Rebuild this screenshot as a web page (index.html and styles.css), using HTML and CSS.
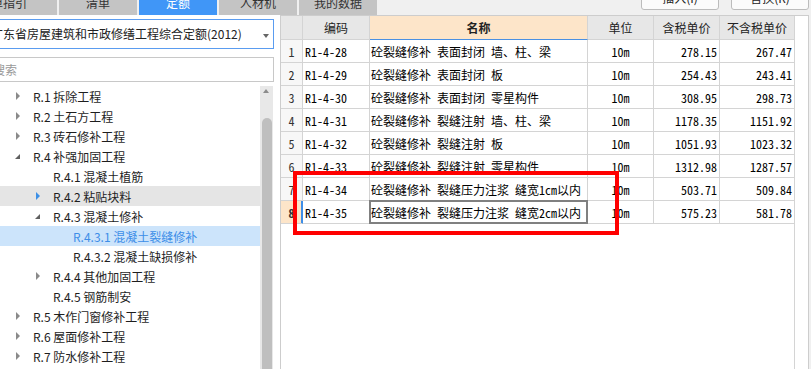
FILE: index.html
```html
<!DOCTYPE html>
<html lang="zh-CN">
<head>
    <meta charset="UTF-8">
    <title>定额</title>
    <link rel="stylesheet" href="styles.css">
</head>
<body>
    <div class="topbar">
        <div class="tabs">
            <div class="tab tab-first">清单指引</div>
            <div class="tab">清单</div>
            <div class="tab active">定额</div>
            <div class="tab">人材机</div>
            <div class="tab">我的数据</div>
        </div>
        <div class="actions">
            <div class="btn">插入(I)</div>
            <div class="btn">替换(R)</div>
        </div>
    </div>

    <div class="main">
        <div class="side">
            <div class="select">广东省房屋建筑和市政修缮工程综合定额(2012)<span class="caret"></span></div>
            <div class="search">搜索</div>
            <div class="tree-wrap">
                <div class="tree">
                    <div class="node"><span class="arrow closed"></span>R.1 拆除工程</div>
                    <div class="node"><span class="arrow closed"></span>R.2 土石方工程</div>
                    <div class="node"><span class="arrow closed"></span>R.3 砖石修补工程</div>
                    <div class="node"><span class="arrow open"></span>R.4 补强加固工程</div>
                    <div class="node lv2"><span class="arrow"></span>R.4.1 混凝土植筋</div>
                    <div class="node lv2 hover"><span class="arrow closed"></span>R.4.2 粘贴块料</div>
                    <div class="node lv2"><span class="arrow open"></span>R.4.3 混凝土修补</div>
                    <div class="node lv3 selected"><span class="arrow"></span>R.4.3.1 混凝土裂缝修补</div>
                    <div class="node lv3"><span class="arrow"></span>R.4.3.2 混凝土缺损修补</div>
                    <div class="node lv2"><span class="arrow closed"></span>R.4.4 其他加固工程</div>
                    <div class="node lv2"><span class="arrow"></span>R.4.5 钢筋制安</div>
                    <div class="node"><span class="arrow closed"></span>R.5 木作门窗修补工程</div>
                    <div class="node"><span class="arrow closed"></span>R.6 屋面修补工程</div>
                    <div class="node"><span class="arrow closed"></span>R.7 防水修补工程</div>
                </div>
                <div class="scrollbar">
                    <span class="sb-up"></span>
                    <span class="sb-thumb"></span>
                </div>
            </div>
        </div>

        <div class="panel">
            <div class="grid">
                <div class="hd"></div>
                <div class="hd">编码</div>
                <div class="hd hd-active">名称</div>
                <div class="hd">单位</div>
                <div class="hd">含税单价</div>
                <div class="hd">不含税单价</div>

                <div class="c no">1</div>
                <div class="c code">R1-4-28</div>
                <div class="c name">砼裂缝修补 表面封闭 墙、柱、梁</div>
                <div class="c unit">10m</div>
                <div class="c num">278.15</div>
                <div class="c num">267.47</div>

                <div class="c no">2</div>
                <div class="c code">R1-4-29</div>
                <div class="c name">砼裂缝修补 表面封闭 板</div>
                <div class="c unit">10m</div>
                <div class="c num">254.43</div>
                <div class="c num">243.41</div>

                <div class="c no">3</div>
                <div class="c code">R1-4-30</div>
                <div class="c name">砼裂缝修补 表面封闭 零星构件</div>
                <div class="c unit">10m</div>
                <div class="c num">308.95</div>
                <div class="c num">298.73</div>

                <div class="c no">4</div>
                <div class="c code">R1-4-31</div>
                <div class="c name">砼裂缝修补 裂缝注射 墙、柱、梁</div>
                <div class="c unit">10m</div>
                <div class="c num">1178.35</div>
                <div class="c num">1151.92</div>

                <div class="c no">5</div>
                <div class="c code">R1-4-32</div>
                <div class="c name">砼裂缝修补 裂缝注射 板</div>
                <div class="c unit">10m</div>
                <div class="c num">1051.93</div>
                <div class="c num">1023.32</div>

                <div class="c no">6</div>
                <div class="c code">R1-4-33</div>
                <div class="c name">砼裂缝修补 裂缝注射 零星构件</div>
                <div class="c unit">10m</div>
                <div class="c num">1312.98</div>
                <div class="c num">1287.57</div>

                <div class="c no">7</div>
                <div class="c code">R1-4-34</div>
                <div class="c name">砼裂缝修补 裂缝压力注浆 缝宽1cm以内</div>
                <div class="c unit">10m</div>
                <div class="c num">503.71</div>
                <div class="c num">509.84</div>

                <div class="c no current">8</div>
                <div class="c code">R1-4-35</div>
                <div class="c name editing">砼裂缝修补 裂缝压力注浆 缝宽2cm以内</div>
                <div class="c unit">10m</div>
                <div class="c num">575.23</div>
                <div class="c num">581.78</div>
            </div>
            <div class="grid-fill"></div>
            <div class="mark"></div>
        </div>
    </div>
</body>
</html>
```

FILE: styles.css
```css
* {
    margin: 0;
    padding: 0;
    box-sizing: border-box;
}

body {
    width: 811px;
    height: 369px;
    overflow: hidden;
    background: #f0f0f0;
    font-family: "Noto Sans CJK SC", "Liberation Sans", sans-serif;
    font-size: 12px;
    color: #222;
}

/* top tabs + buttons */
.topbar {
    display: flex;
    height: 15px;
}

.tabs {
    display: flex;
    gap: 2px;
    margin-left: -51px;
}

.tab {
    width: 78px;
    height: 24px;
    margin-top: -9px;
    line-height: 24px;
    text-align: center;
    background: #c4c4c4;
    color: #333;
}

.tab-first {
    width: 108px;
}

.tab.active {
    background: #4096f7;
    color: #fff;
}

.actions {
    display: flex;
    gap: 12px;
    margin-left: auto;
    padding-right: 2px;
}

.btn {
    width: 78px;
    height: 24px;
    margin-top: -14px;
    line-height: 22px;
    text-align: center;
    background: #fbfbfb;
    border: 1px solid #bcbcbc;
    border-radius: 3px;
    color: #222;
}

.main {
    display: flex;
    height: 354px;
    overflow: hidden;
}

/* left side: library picker and tree */
.side {
    width: 280px;
    background: #fff;
    display: flex;
    flex-direction: column;
}

.select {
    position: relative;
    width: 286px;
    height: 30px;
    margin: 4px 0 0 -12px;
    padding-left: 2px;
    border: 1px solid #5a9cf0;
    line-height: 28px;
    white-space: nowrap;
    color: #222;
}

.caret {
    position: absolute;
    right: 4px;
    top: 14px;
    border-top: 4px solid #666;
    border-left: 3.5px solid transparent;
    border-right: 3.5px solid transparent;
}

.search {
    width: 286px;
    height: 25px;
    margin: 8px 0 0 -12px;
    padding-left: 4px;
    border: 1px solid #c8c8c8;
    line-height: 23px;
    color: #999;
}

.tree-wrap {
    display: flex;
    flex: 1;
    margin-top: 4px;
}

.tree {
    width: 260px;
}

.node {
    display: flex;
    align-items: center;
    height: 20px;
    padding-left: 10px;
    color: #1e1e1e;
    white-space: nowrap;
}

.node.lv2 { padding-left: 30px; }
.node.lv3 { padding-left: 50px; }

.node.hover { background: #e5e5e5; }

.node.selected {
    background: #cce4fb;
    color: #3d8ee8;
}

.arrow {
    position: relative;
    width: 16px;
    height: 20px;
    margin-right: 7px;
}

.arrow.closed::before {
    content: "";
    position: absolute;
    left: 6px;
    top: 6px;
    border-left: 4px solid #8a8a8a;
    border-top: 4px solid transparent;
    border-bottom: 4px solid transparent;
}

.hover .arrow.closed::before {
    border-left-color: #3c8fe6;
}

.arrow.open::before {
    content: "";
    position: absolute;
    left: 5px;
    top: 8px;
    border-bottom: 5px solid #606060;
    border-left: 5px solid transparent;
}

.scrollbar {
    position: relative;
    width: 13px;
    background: #e8e8e8;
    overflow: hidden;
}

.sb-up {
    position: absolute;
    left: 3px;
    top: 3px;
    border-bottom: 4px solid #8c8c8c;
    border-left: 3.5px solid transparent;
    border-right: 3.5px solid transparent;
}

.sb-thumb {
    position: absolute;
    left: 2px;
    top: 32px;
    width: 10px;
    height: 300px;
    border-radius: 5px;
    background: #bfbfbf;
}

/* right side: quota table */
.panel {
    position: relative;
    width: 529px;
    height: 370px;
    background: #fff;
    border: 1px solid #cdcdcd;
    display: flex;
    flex-direction: column;
}

.grid {
    display: grid;
    grid-template-columns: 22px 67px 218px 66px 66px 75px;
    grid-template-rows: 24px;
    grid-auto-rows: 23px;
    width: 514px;
}

.hd, .c {
    display: flex;
    align-items: center;
    border-right: 1px solid #d4d4d4;
    border-bottom: 1px solid #d4d4d4;
    white-space: nowrap;
    overflow: hidden;
}

.hd {
    justify-content: center;
    background: #e7e7e7;
    color: #222;
}

.hd-active {
    background: #fde5c9;
    border-bottom-color: #4a90e2;
    font-weight: bold;
}

.c {
    font-family: "Noto Sans Mono CJK SC", "Noto Sans CJK SC", monospace;
    color: #000;
}

.no {
    justify-content: center;
    background: #f7f7f7;
    color: #333;
}

.no.current {
    background: #fde5c9;
    font-weight: bold;
    border-right-color: #3d8ee8;
    box-shadow: inset -1px 0 #3d8ee8;
}

.code { padding-left: 2px; }
.name { padding-left: 1px; }
.unit { justify-content: center; }

.num {
    justify-content: flex-end;
    padding-right: 2px;
}

.editing {
    position: relative;
    overflow: visible;
}

.editing::after {
    content: "";
    position: absolute;
    left: -1px;
    top: -1px;
    right: -1px;
    bottom: -1px;
    border: 2px solid #808080;
}

.grid-fill {
    flex: 1;
    width: 514px;
    border-right: 1px solid #d4d4d4;
}

.mark {
    position: absolute;
    left: 12px;
    top: 155px;
    width: 326px;
    height: 64px;
    border: 4px solid #ff0000;
}
```
